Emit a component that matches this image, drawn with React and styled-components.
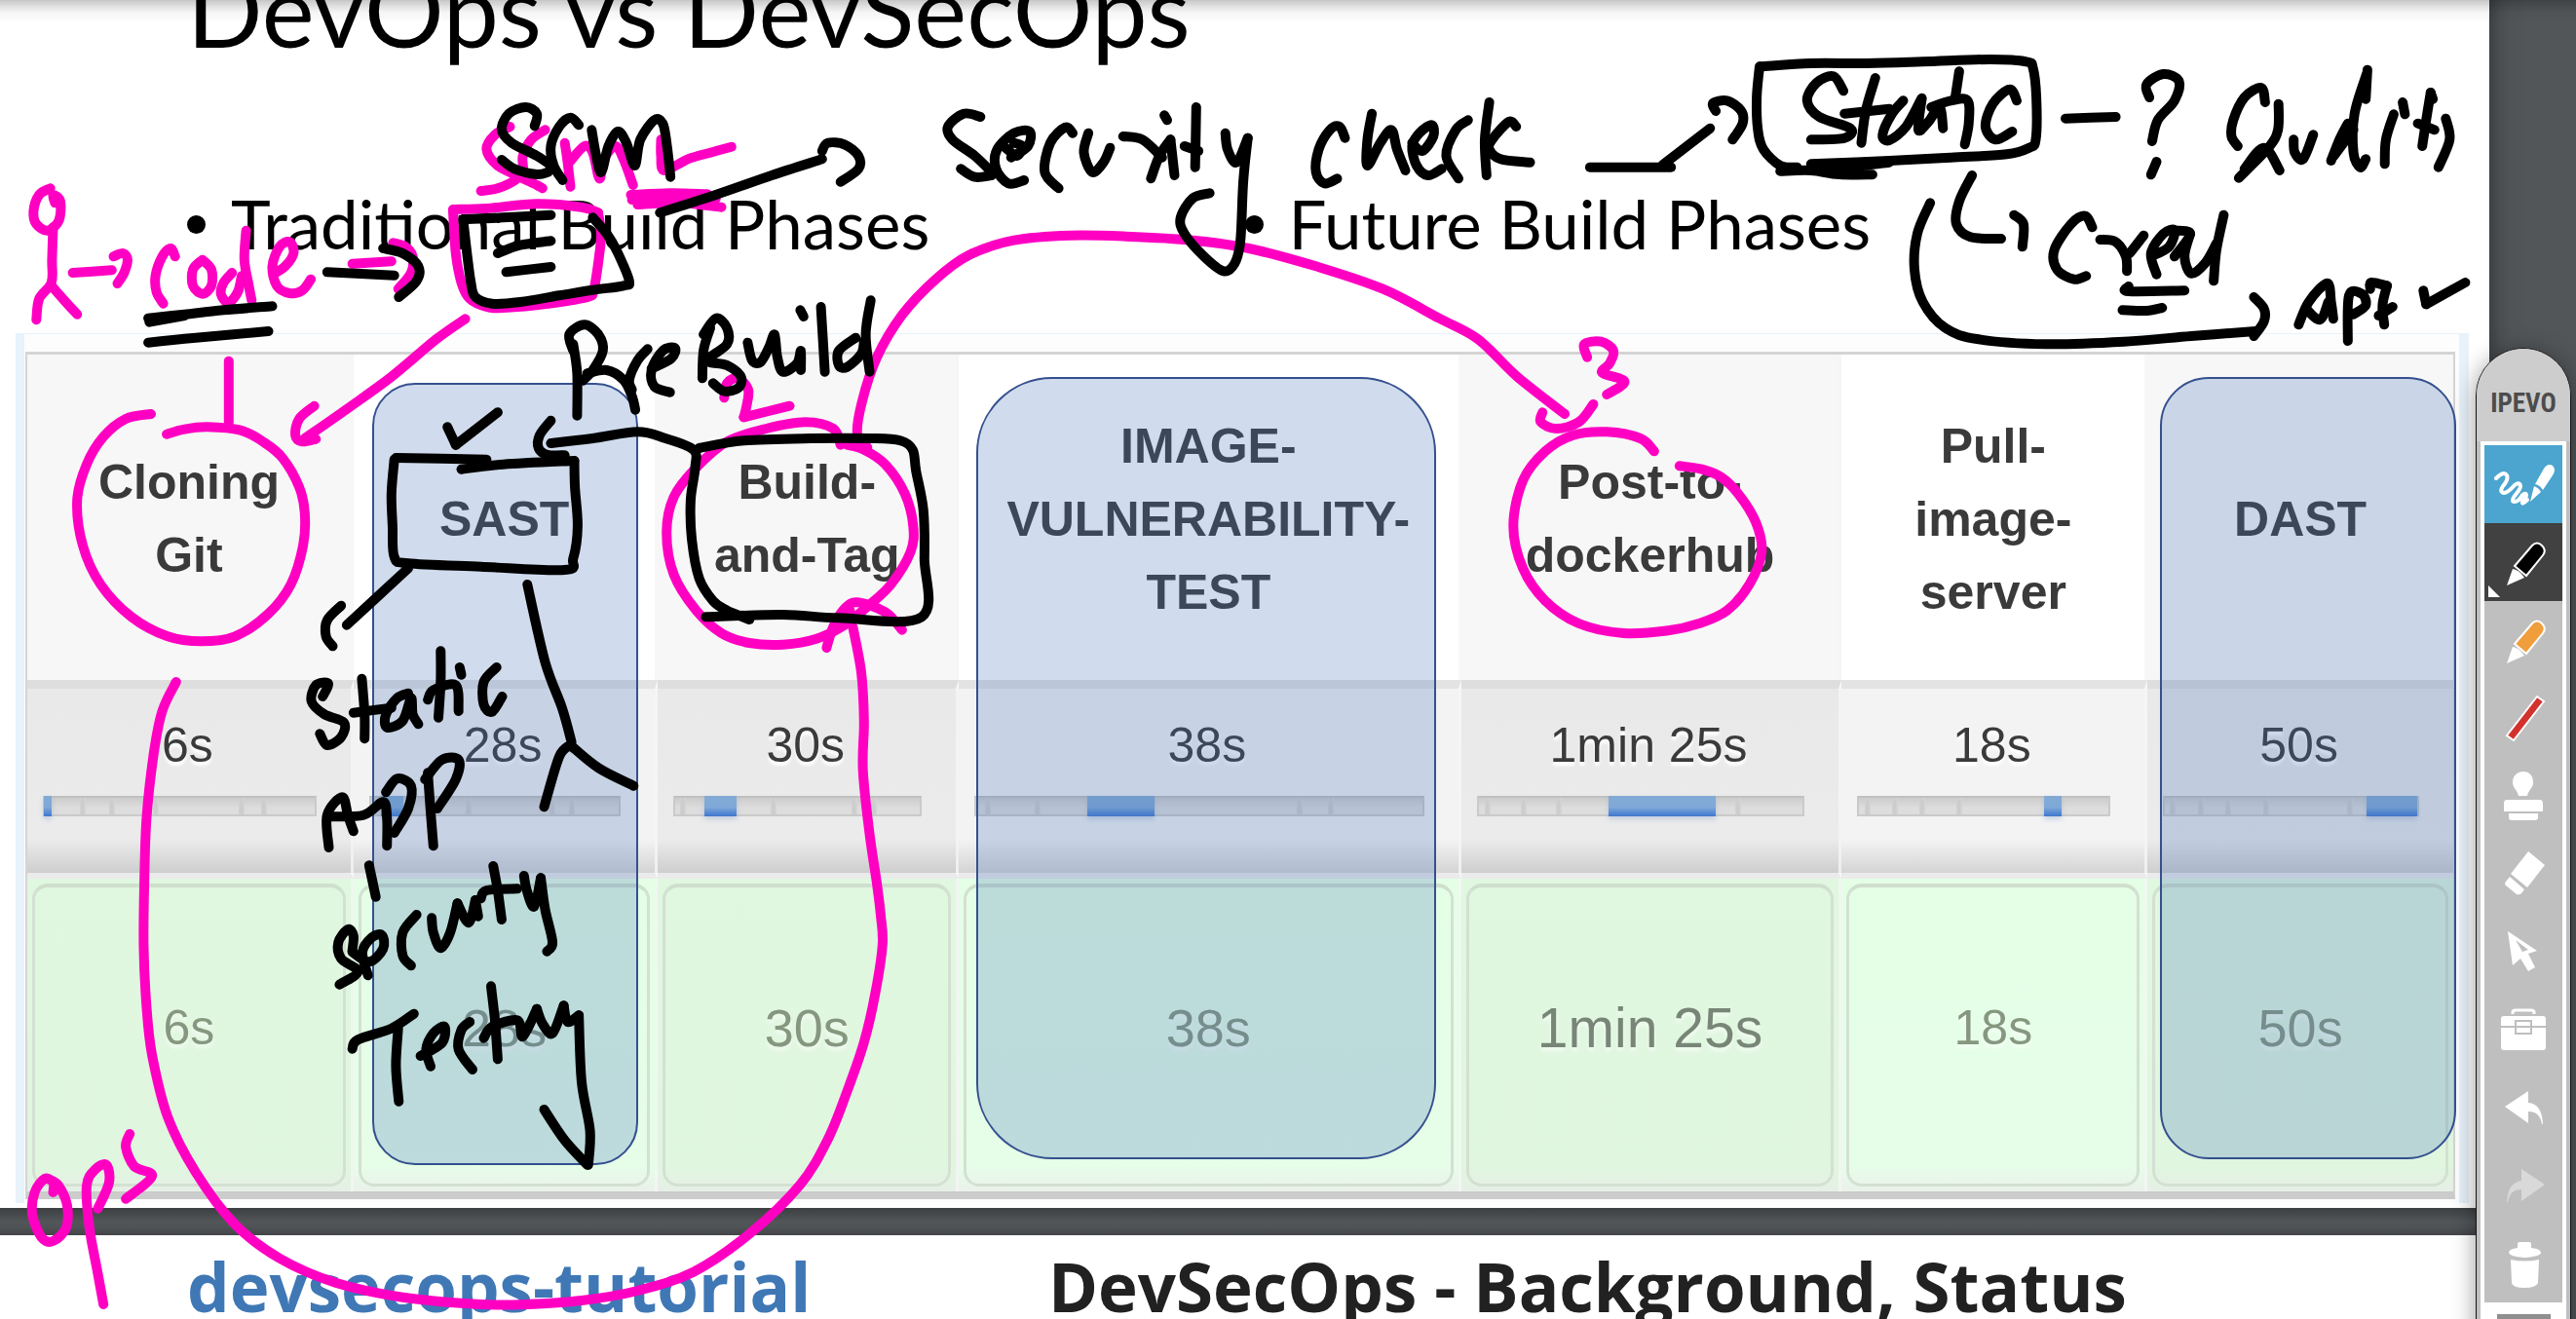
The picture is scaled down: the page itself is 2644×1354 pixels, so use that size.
import React from "react";
import styled, { createGlobalStyle, css } from "styled-components";

const GlobalStyle = createGlobalStyle`
  *, *::before, *::after { box-sizing: border-box; }
  html, body { margin: 0; background: #525659; }
`;

const SANS = `"Liberation Sans", Arial, sans-serif`;

/* ---------- document viewer ---------- */

const Viewer = styled.main`
  position: relative;
  height: 100vh;
  overflow: hidden;
  background: #525659;
`;

const TopShade = styled.div`
  position: absolute;
  inset: 0 0 auto 0;
  height: 24px;
  border-top: 1px solid rgba(0, 0, 0, 0.22);
  background: linear-gradient(rgba(0, 0, 0, 0.2), rgba(0, 0, 0, 0.04) 50%, transparent);
`;

const Pages = styled.div`
  display: flex;
  flex-direction: column;
  margin: -56px 89px 0 0;
  background: #525659;
  box-shadow: 0 0 24px rgba(0, 0, 0, 0.5);
`;

const Page = styled.section`
  background: #fff;
`;

const PageGap = styled.div`
  height: 28px;
  background: linear-gradient(#3d3f41, #525659 50%, #505356 70%, #444548);
`;

const Title = styled.h1`
  margin: 0;
  padding: 0 192px;
  font: 400 102px/132px Lato, sans-serif;
  color: #000;
  white-space: nowrap;
`;

const Phases = styled.ul`
  display: grid;
  grid-template-columns: 1fr 1fr;
  margin: 114px 0 72px;
  padding: 0 192px;
  list-style: none;
`;

const Phase = styled.li`
  display: flex;
  align-items: center;
  gap: 26px;
  font: 400 69px/80px Lato, sans-serif;
  color: #000;
  white-space: nowrap;

  &::before {
    content: "";
    width: 19px;
    height: 19px;
    border-radius: 50%;
    background: #000;
  }
`;

/* ---------- stage board ---------- */

const Board = styled.div`
  position: relative;
  margin: 0 21px 5px 16px;
  padding: 18px 4px 4px 1px;
  border: solid #e8f2fa;
  border-width: 1px 10px 0 9px;
  background: #fdfdfe;
`;

const StageTable = styled.table`
  width: 100%;
  table-layout: fixed;
  border-collapse: separate;
  border-spacing: 0;
  border: solid #d4d4d4;
  border-width: 3px 2px 0 2px;
  border-bottom: 8px solid #cccccc;
  font-family: ${SANS};
  color: #3a3a3a;
`;

const cellEdge = css`
  border-right: 3px solid rgba(245, 245, 245, 0.8);
  &:last-child { border-right: 0; }
`;

const StageName = styled.th`
  ${cellEdge}
  height: 334px;
  padding: 4px 0 0;
  background: #ffffff;
  font: 700 50px/75px ${SANS};
  white-space: pre-line;
  &:nth-child(odd) { background: #f7f7f7; }
`;

const TimeCell = styled.td`
  ${cellEdge}
  height: 204px;
  padding: 22px 35px 0 16px;
  vertical-align: top;
  border-top: 9px solid #e3e3e3;
  border-bottom: 6px solid #ebebeb;
  background: linear-gradient(#f3f3f3 82%, #d4d4d4);
  &:nth-child(odd) {
    border-top-color: #dedede;
    background: linear-gradient(#e9e9e9, #ebebeb 82%, #cecece);
  }
`;

const Time = styled.div`
  margin: 0 -16px 0 0;
  font-size: 50px;
  line-height: 72px;
  text-align: center;
  text-shadow: 0 4px 3px #fff;
`;

const Track = styled.div`
  position: relative;
  height: 21px;
  margin-top: 16px;
  border: 2px solid #cacaca;
  border-top-color: #c0c0c0;
  background: linear-gradient(#cccccc, #dddddd 60%);
`;

const Tick = styled.i`
  position: absolute;
  top: 0;
  bottom: 0;
  left: ${(p) => p.$at}%;
  width: 6px;
  background: linear-gradient(to right, #d2d2d2, #cbcbcb, #d6d6d6);
`;

const Span = styled.i`
  position: absolute;
  top: -2px;
  bottom: -2px;
  left: ${(p) => p.$from}%;
  width: ${(p) => p.$size}%;
  background: linear-gradient(#83aad4, #7fa9d8 55%, #3f77cf);
  box-shadow: 0 3px 5px rgba(120, 150, 200, 0.35);
`;

const ResultCell = styled.td`
  ${cellEdge}
  height: 321px;
  padding: 5px;
  background: linear-gradient(#e4ffe6, #e6fde8 92%, #eaf1ea);
  &:nth-child(odd) { background: linear-gradient(#e0f7e0, #e0f6df 92%, #e6efe6); }
`;

const Result = styled.div`
  display: flex;
  align-items: center;
  justify-content: center;
  height: 311px;
  padding-bottom: 16px;
  border: 3px solid #d3e0d2;
  border-top: 4px solid #cfdfcd;
  border-radius: 16px;
  font-size: ${(p) => p.$size}px;
  line-height: 1;
  color: ${(p) => (p.$size > 56 ? "#778677" : "#86977f")};
  text-shadow: 0 4px 4px rgba(255, 255, 255, 0.6);
`;

const Highlight = styled.div`
  position: absolute;
  top: ${(p) => p.$top}px;
  left: ${(p) => p.$left}%;
  width: ${(p) => p.$width}%;
  height: 803px;
  border: 2px solid #34508f;
  border-radius: ${(p) => p.$radius}px;
  background: rgba(66, 114, 184, 0.25);
`;

/* ---------- next page ---------- */

const Banner = styled.header`
  display: grid;
  grid-template-columns: 884px 1fr;
  padding: 2px 192px 40px;
  font: 700 69px/100px "Open Sans", sans-serif;
  white-space: nowrap;
`;

const BannerLink = styled.a`
  color: #3f78b5;
  text-decoration: none;
`;

const BannerTitle = styled.h2`
  margin: 0;
  font: inherit;
  color: #212121;
`;

/* ---------- pen toolbar ---------- */

const Toolbar = styled.aside`
  position: absolute;
  top: 357px;
  right: 5px;
  bottom: -40px;
  width: 98px;
  display: flex;
  flex-direction: column;
  border: 1px solid #141414;
  border-radius: 49px 49px 0 0;
  background: #bfbfbf;
  box-shadow: 0 4px 24px rgba(0, 0, 0, 0.4);
  overflow: hidden;
`;

const Brand = styled.div`
  padding-top: 36px;
  height: 96px;
  background: #cdcdcd;
  color: #4c4c4c;
  font: 700 27px/40px "Roboto Condensed", Roboto, sans-serif;
  text-align: center;
`;

const Tools = styled.div`
  flex: 1;
  display: flex;
  flex-direction: column;
  margin: 0 4px;
  padding: 4px;
  background: #fff;
`;

const Tool = styled.button`
  position: relative;
  display: flex;
  align-items: center;
  justify-content: center;
  flex: none;
  height: 80px;
  padding: 0;
  border: 0;
  background: ${(p) => p.$bg || "#bfbfbf"};
  svg { display: block; width: 72px; height: 60px; }
`;

const Handle = styled.div`
  width: 55px;
  height: 40px;
  margin: 12px auto 0;
  background: #8f8f8f;
`;

const Ink = styled.svg`
  position: absolute;
  inset: 0;
  width: 100%;
  height: 100%;
  pointer-events: none;
`;

/* ---------- data ---------- */

const STAGES = [
  { name: "Cloning\nGit", w: 13.45, time: "6s", size: 50, from: -0.5, span: 3, ticks: [13, 24, 40, 72, 80] },
  { name: "SAST", w: 12.55, time: "28s", size: 54, from: 4, span: 9, ticks: [38, 72, 80] },
  { name: "Build-\nand-Tag", w: 12.4, time: "30s", size: 54, from: 12, span: 13, ticks: [2, 39, 72, 80] },
  { name: "IMAGE-\nVULNERABILITY-\nTEST", w: 20.7, time: "38s", size: 54, from: 25, span: 15, ticks: [2, 13, 72, 79] },
  { name: "Post-to-\ndockerhub", w: 15.7, time: "1min 25s", size: 57, from: 40, span: 33, ticks: [2, 13, 24, 79] },
  { name: "Pull-\nimage-\nserver", w: 12.6, time: "18s", size: 50, from: 74, span: 7, ticks: [2, 13, 24, 39] },
  { name: "DAST", w: 12.6, time: "50s", size: 54, from: 80, span: 20, ticks: [2, 13, 24, 39, 72] },
];

const PINK = "#ff00c3";
const BLACK = "#000000";

/* Pen strokes are recorded per tile; a tile maps its own grid onto the screen. */
const TILES = {
  A: [0, 0], B: [880, 0], C: [1744, 0], D: [0, 440], E: [880, 440], G: [0, 894],
};

const STROKES = [
  [PINK, "A", [
    "90,580 70,600 60,650 65,690 85,710 105,680 108,620 95,600 98,625",
    "95,700 93,800 92,870 70,920 65,985",
    "92,880 115,925 138,968",
    "130,840 200,832",
    "203,790 220,780 228,800 222,840 210,873",
    "313,790 305,765 290,790 278,850 280,900 292,935",
    "362,800 345,830 345,880 362,905 378,880 378,830 362,800",
    "415,840 400,870 395,905 408,932 425,900 432,850",
    "440,710 437,800 445,880 450,925",
    "488,845 510,820 525,780 518,745 500,760 487,820 495,880 518,903 540,895 556,860",
    "630,812 700,805",
    "703,748 725,760 738,790 735,840 712,890",
    "810,645 815,780 825,870 840,920 870,945 900,948 980,935 1050,915 1062,890 1072,780 1075,720 1070,660",
    "812,645 870,642 960,628 1040,638 1070,655",
    "912,390 885,415 870,460 890,510 930,545 960,570 970,580",
    "860,588 890,580 925,550 935,520 935,480 950,430 975,400",
    "1010,440 1015,500 1020,575",
    "1018,500 1045,450 1060,470 1072,550 1080,490 1100,450 1115,490 1132,570",
    "1182,430 1182,480 1188,525 1230,490 1270,470 1308,452",
    "1128,600 1200,595 1265,598",
    "1130,615 1200,612 1280,612",
    "1140,630 1215,625 1290,638",
    "832,982 780,1045 700,1160 620,1260 545,1350",
    "562,1250 535,1290 528,1340 540,1360 565,1352",
    "409,1112 409,1300",
    "270,1275 225,1290 185,1345 155,1430 138,1540 148,1680 180,1800 235,1900 300,1960 360,1975 420,1960 480,1890 520,1800 542,1680 545,1580 535,1500 505,1410 470,1360 430,1325 370,1315 330,1322 298,1337",
    "1295,1225 1300,1180 1320,1165 1338,1200 1335,1250 1330,1285",
    "1330,1285 1412,1250",
    "1503,1370 1490,1320 1440,1300 1370,1320 1300,1360 1245,1440 1205,1530 1192,1640 1205,1770 1245,1880 1290,1950 1340,1980 1400,1985 1460,1967 1510,1925 1553,1865 1593,1800 1628,1700 1633,1620 1618,1520 1583,1430 1545,1385 1515,1370",
  ]],
  [PINK, "B", [
    "18,1378 0,1340 8,1240 35,1100 80,970 140,860 200,785 280,740 380,725 480,728 600,740 700,765 820,820 940,890 1040,980 1110,1045 1180,1160 1265,1275",
    "1225,1270 1222,1300 1250,1320 1290,1300 1316,1245",
    "1305,1100 1300,1060 1330,1052 1352,1080 1345,1120 1332,1148 1372,1175 1340,1215",
  ]],
  [PINK, "E", [
    "1425,70 1400,30 1340,10 1280,20 1230,70 1190,160 1173,300 1190,430 1230,530 1290,600 1370,630 1450,622 1505,600 1555,560 1595,480 1617,380 1607,290 1575,200 1545,150 1510,125 1470,115",
  ]],
  [PINK, "D", [
    "315,780 290,870 275,1000 262,1200 258,1400 257,1600 262,1780 272,1930 300,2120 350,2290 420,2450 500,2555 600,2630 720,2675 860,2697 940,2697 1040,2685 1140,2655 1240,2597 1340,2480 1430,2330 1480,2190 1515,2040 1545,1890 1565,1740 1578,1590 1575,1500 1568,1400 1555,1250 1543,1050 1545,900 1540,750 1525,610",
    "1478,675 1490,610 1510,555 1533,535 1583,565 1613,620",
    "1480,640 1510,590 1520,560",
  ]],
  [PINK, "G", [
    "95,990 95,960 80,948 62,990 58,1060 75,1130 95,1140 118,1100 120,1030 105,970 88,950",
    "175,1040 195,960 190,905 170,920 155,970 160,1100 175,1240 185,1335",
    "232,810 225,850 240,910 272,940 225,1010",
  ]],
  [BLACK, "A", [
    "265,980 330,968 400,955 487,943",
    "267,992 330,972",
    "265,1055 350,1040 480,1020",
    "585,838 705,848",
    "685,765 720,780 748,820 745,865 713,915",
    "828,675 835,780 842,870 850,915 880,935 930,930 1000,910 1060,893 1115,880 1125,865 1105,780 1085,720 1060,670",
    "830,675 900,670 985,662",
    "890,780 930,755 985,742",
    "905,838 985,822",
    "956,388 960,350 940,330 910,350 897,400 915,440 960,480 990,515",
    "897,492 920,520 960,537 980,530",
    "1035,385 1020,362 1000,390 985,450 990,510 1006,555",
    "1058,400 1065,470 1075,530 1088,450 1105,405 1120,440 1135,510 1145,430 1170,370 1185,380 1192,440 1199,545",
    "1180,655 1280,600 1380,540 1470,490",
    "1470,465 1480,440 1510,445 1535,480 1535,520 1503,560",
    "1025,1060 1032,1150 1032,1280",
    "1025,1080 1018,1030 1045,1000 1070,1030 1078,1080 1060,1140 1042,1172",
    "1050,1150 1085,1140 1115,1170 1130,1220 1136,1262",
    "1158,1075 1140,1110 1125,1170 1130,1200",
    "1165,1135 1200,1105 1207,1072 1185,1080 1165,1140 1170,1190 1198,1208",
    "1270,1010 1258,1080 1256,1165",
    "1258,1030 1280,980 1300,1010 1300,1060 1265,1110 1300,1125 1325,1160 1320,1195 1295,1205 1275,1180",
    "1337,1055 1345,1110 1360,1115 1375,1070 1385,1030 1390,1100 1400,1145 1425,1120 1432,1080 1432,1140",
    "1431,955 1437,975",
    "1468,945 1475,1145",
    "1530,1040 1500,1080 1500,1125 1515,1130 1540,1090 1545,1050",
    "1557,925 1548,1030 1555,1145",
    "800,1315 815,1370",
    "815,1370 890,1270",
    "985,1295 965,1340 963,1380 978,1400 1010,1402",
    "985,1365 1060,1350 1140,1330 1190,1350 1240,1385 1243,1440 1235,1540 1237,1660 1250,1780 1275,1850 1300,1880 1340,1908",
    "1250,1380 1330,1357 1450,1350 1560,1350 1610,1357 1632,1385 1638,1450 1651,1570 1653,1720 1648,1900 1500,1903 1400,1893 1262,1900",
  ]],
  [BLACK, "B", [
    "220,360 190,350 162,390 170,430 210,480 240,530",
    "185,520 210,545 240,540",
    "275,485 305,450 308,405 280,410 250,460 248,520 270,565 298,555",
    "265,455 285,480 295,450 280,440",
    "385,410 372,392 345,440 335,530 360,580",
    "413,410 405,470 420,530 440,500 452,455",
    "475,420 510,430 545,485",
    "560,430 540,480 525,550",
    "560,430 567,540",
    "549,355 554,370",
    "606,330 604,515",
    "585,450 610,465",
    "658,410 662,460 678,500 698,425",
    "698,425 690,560 685,740 675,810 655,835 620,790 585,720 578,670 600,610 630,595",
    "872,425 862,390 845,400 825,460 820,530 835,565 858,550",
    "920,350 912,430 912,510 935,440 955,400 965,460 980,525",
    "992,440 1010,465 1030,420 1027,385 1005,410 992,450 1000,510 1020,540 1045,520",
    "1092,370 1070,400 1053,480 1075,550",
    "1130,315 1122,430 1125,540",
    "1178,390 1165,375 1135,430 1130,460 1150,490 1203,500",
    "1310,515 1455,515",
    "1440,508 1525,395",
    "1535,342 1530,318 1555,310 1580,340 1583,380 1565,430",
  ]],
  [BLACK, "C", [
    "108,205 103,300 105,400 115,460 145,510 175,515",
    "110,205 200,195 300,195 400,190 520,183 585,190 597,210 603,300 602,430 590,455 550,475 450,485 340,495 200,505",
    "145,527 200,525 250,537 310,538",
    "210,512 260,515 340,500",
    "258,280 240,235 210,255 193,310 215,360 270,395 260,425 200,430",
    "315,240 298,340 290,440",
    "260,350 340,335",
    "365,310 345,350 328,415 340,432 370,390 398,302",
    "398,305 392,400 410,375 430,330 436,395",
    "415,330 450,310 480,310 482,380 475,445",
    "465,220 458,300",
    "568,310 555,275 525,320 512,390 530,430 560,405",
    "655,365 745,360",
    "805,300 800,260 830,228 858,250 850,310 820,370 810,435",
    "818,498 808,538",
    "1012,315 1005,270 975,300 955,370 952,420 963,450",
    "1036,320 1035,400 1018,455 965,548",
    "975,520 1010,455 1038,525",
    "1063,430 1065,470 1080,490 1098,415",
    "1130,495 1145,430 1160,380",
    "1135,480 1165,410 1170,400",
    "1195,215 1192,305",
    "1193,230 1172,350 1170,470 1182,515 1192,490",
    "1242,352 1228,430 1226,505",
    "1258,315 1262,352",
    "1308,285 1312,305",
    "1308,285 1300,370 1293,450",
    "1285,380 1315,400",
    "1335,365 1342,430 1322,515",
    "488,540 465,620 460,690 485,730 540,735",
    "563,662 580,690 578,760",
    "703,700 690,665 665,690 635,770 640,830 670,860 692,850",
    "717,738 745,745 763,790 765,835",
    "795,725 770,780",
    "808,790 840,760 850,710 830,720 808,780 818,845",
    "850,710 878,720 850,790",
    "878,720 868,790 880,842 905,810 925,750",
    "938,662 925,770 920,865",
    "768,882 768,897 868,895",
    "757,955 800,957 828,948",
    "413,625 390,720 385,830 400,930 440,1010 500,1045 620,1060 760,1052 880,1035 995,1020",
    "992,915 1010,950 1010,990 992,1035",
    "1072,1000 1090,930 1123,872 1130,930 1134,982",
    "1085,950 1110,985 1125,930",
    "1160,1050 1162,910 1185,905 1192,940 1170,968",
    "1200,890 1202,870 1230,880",
    "1230,880 1222,940 1225,1000",
    "1215,972 1240,945",
    "1295,895 1300,937",
    "1300,937 1370,870",
  ]],
  [BLACK, "D", [
    "705,95 700,200 702,300 705,395 730,415 860,425 1010,435 1025,400 1033,300 1028,180 1027,100",
    "708,90 870,95",
    "825,125 900,110 1027,99",
    "730,430 620,605",
    "610,545 585,590 583,640 595,670",
    "943,480 975,720 1005,860 1022,965",
    "1020,975 1000,1010 973,1165",
    "1020,975 1070,1045 1133,1100",
    "577,825 587,785 565,790 557,840 580,880 615,905 610,950 585,975 572,940",
    "647,770 652,880 652,955",
    "632,875 700,860",
    "730,815 710,830 690,880 692,920 720,900 735,830 738,880 748,910",
    "788,685 788,780 784,890",
    "765,835 775,805 815,790 820,870",
    "822,735 825,758",
    "888,735 865,780 865,850 880,872 898,825",
    "588,1290 585,1190 612,1135 622,1190 632,1240",
    "590,1195 650,1190 685,1150 692,1200 692,1285",
    "690,1120 710,1078 735,1100 730,1170 705,1245",
    "765,1060 770,1180 775,1285",
    "760,1080 790,1020 820,1020 815,1080 782,1170",
    "660,1345 672,1442",
  ]],
  [BLACK, "G", [
    "630,245 632,200 622,180 605,220 610,270 640,310 607,350",
    "630,250 660,280 685,240 683,198 665,205 648,250 658,322",
    "745,135 720,190 720,260 735,292",
    "772,145 775,190 788,238 805,190 818,100",
    "818,100 838,160 850,90",
    "850,90 855,140",
    "882,-15 890,60 897,150",
    "860,85 870,60 925,55",
    "937,15 942,60 955,110 967,22",
    "967,22 975,120 988,220 978,248",
    "630,548 640,520 700,485 740,440",
    "712,485 708,600 713,710",
    "752,570 790,530 795,480 775,500 762,550 770,602",
    "840,465 825,490 820,550 845,612",
    "878,355 885,460 890,580",
    "865,515 880,480 925,460 935,510 960,425",
    "960,425 970,470 988,500 1008,415",
    "1008,415 1015,465 1035,445",
    "1035,445 1040,650 1055,800 1052,905",
    "1050,905 1010,830 973,735",
  ]],
];

/* Joins recorded pen points with Catmull-Rom curves. */
function smooth(tile, text) {
  const [ox, oy] = TILES[tile];
  const p = text.split(" ").map((s) => {
    const [x, y] = s.split(",").map(Number);
    return [ox + x * 0.574, oy + y / 3];
  });
  const f = (n) => n.toFixed(1);
  let d = `M${f(p[0][0])} ${f(p[0][1])}`;
  for (let i = 0; i < p.length - 1; i++) {
    const a = p[i - 1] || p[i];
    const b = p[i];
    const c = p[i + 1];
    const e = p[i + 2] || c;
    d += `C${f(b[0] + (c[0] - a[0]) / 6)} ${f(b[1] + (c[1] - a[1]) / 6)} ${f(c[0] - (e[0] - b[0]) / 6)} ${f(c[1] - (e[1] - b[1]) / 6)} ${f(c[0])} ${f(c[1])}`;
  }
  return d;
}

/* ---------- toolbar icons ---------- */

const Pen = ({ fill }) => (
  <svg viewBox="-36 -30 72 60">
    <path d="M-9 4 L9 -17 Q14 -22 19 -17 Q24 -12 20 -7 L3 14 Z" fill={fill} stroke="#fff" strokeWidth="2" />
    <path d="M-11 7 Q-4 8 1 16 L-17 24 Z" fill="#fff" />
  </svg>
);

const TOOLS = [
  {
    label: "Freehand", bg: "#4ba5cf",
    icon: (
      <svg viewBox="-36 -30 72 60">
        <path d="M-28 -6 Q-20 -14 -17 -9 Q-15 -5 -21 2 Q-25 8 -20 9 Q-16 9 -9 1 Q-4 -3 -3 2 Q-3 5 -9 12 Q-13 18 -9 18 Q-5 18 -1 11 Q3 8 3 12 Q2 15 -1 18 Q-2 22 4 16" fill="none" stroke="#fff" strokeWidth="4" strokeLinecap="round" />
        <path d="M12 0 L21 -16 Q25 -22 30 -19 Q34 -15 30 -9 L20 6 Q17 1 12 0Z M11 2 Q16 4 18 8 L7 18Z" fill="#fff" />
      </svg>
    ),
  },
  { label: "Pen", bg: "#414141", icon: <Pen fill="#000" />, corner: true },
  { label: "Highlighter", icon: <Pen fill="#f09d3c" /> },
  {
    label: "Line",
    icon: (
      <svg viewBox="-36 -30 72 60">
        <path d="M-17 18 L14 -22 L21 -17 L-10 23 Z" fill="#d2322d" stroke="#fff" strokeWidth="2" />
      </svg>
    ),
  },
  {
    label: "Stamp",
    icon: (
      <svg viewBox="-36 -30 72 60" fill="#fff">
        <path d="M0 -25 C6 -25 10 -21 10 -14 C10 -8 5 -6 4 0 H-5 C-6 -6 -11 -8 -11 -14 C-11 -21 -6 -25 0 -25Z" />
        <path d="M-17 4 H17 Q20 4 20 8 V16 H-20 V8 Q-20 4 -17 4Z M-15 18 H15 V22 Q15 25 12 25 H-12 Q-15 25 -15 22Z" />
      </svg>
    ),
  },
  {
    label: "Eraser",
    icon: (
      <svg viewBox="-36 -30 72 60" fill="#fff">
        <path d="M5 -23 L22 -9 L4 14 L-13 0Z M-14 3 L1 16 L-2 20 Q-4 22 -7 21 L-18 12 Q-20 10 -18 8Z" />
      </svg>
    ),
  },
  {
    label: "Select",
    icon: (
      <svg viewBox="-36 -30 72 60" fill="#fff" fillRule="evenodd">
        <path d="M-16 -21 L14 -1 L5 2 L12 16 L5 20 L-3 7 L-11 14Z M-8 -12 L-1 0 L5 -2Z" />
      </svg>
    ),
  },
  {
    label: "Toolbox",
    icon: (
      <svg viewBox="-36 -30 72 60">
        <path d="M-11 -16 V-18 Q-11 -20 -8 -20 H8 Q11 -20 11 -18 V-16" fill="none" stroke="#fff" strokeWidth="3" />
        <rect x="-23" y="-14" width="46" height="35" rx="3" fill="#fff" />
        <path d="M-23 -3 H-8 M8 -3 H23 M-8 -9 H8 V4 H-8Z M-8 -3 H8" fill="none" stroke="#bfbfbf" strokeWidth="2" />
      </svg>
    ),
  },
  {
    label: "Undo",
    icon: (
      <svg viewBox="-36 -30 72 60" fill="#fff">
        <path d="M-19 -1 L5 -17 V-5 Q19 -4 20 17 H19 Q17 4 5 4 V16Z" />
      </svg>
    ),
  },
  {
    label: "Redo",
    icon: (
      <svg viewBox="-36 -30 72 60" fill="#d9d9d9">
        <path d="M22 -1 L-2 -17 V-5 Q-16 -3 -17 17 H-16 Q-14 4 -2 4 V16Z" />
      </svg>
    ),
  },
  {
    label: "Clear",
    icon: (
      <svg viewBox="-36 -30 72 60" fill="#fff">
        <path d="M-6 -16 V-20 Q-6 -22 -4 -22 H6 Q8 -22 8 -20 V-16 Q18 -15 18 -11 Q17 -7 1 -6 Q-14 -7 -15 -11 Q-15 -15 -6 -16Z" />
        <path d="M-13 -4 Q1 -1 16 -4 L15 20 Q13 25 1 25 Q-11 25 -12 20Z" />
      </svg>
    ),
  },
];

const Corner = styled.span`
  position: absolute;
  left: 4px;
  bottom: 4px;
  border: 6px solid transparent;
  border-left-color: #fff;
  border-bottom-color: #fff;
`;

export default function App() {
  return (
    <Viewer>
      <GlobalStyle />
      <Pages>
        <Page>
          <Title>DevOps vs DevSecOps</Title>
          <Phases>
            <Phase>Traditional Build Phases</Phase>
            <Phase>Future Build Phases</Phase>
          </Phases>
          <Board>
            <StageTable>
              <colgroup>
                {STAGES.map((s) => (
                  <col key={s.name} style={{ width: `${s.w}%` }} />
                ))}
              </colgroup>
              <thead>
                <tr>
                  {STAGES.map((s) => (
                    <StageName key={s.name} scope="col">{s.name}</StageName>
                  ))}
                </tr>
              </thead>
              <tbody>
                <tr>
                  {STAGES.map((s) => (
                    <TimeCell key={s.name}>
                      <Time>{s.time}</Time>
                      <Track>
                        {s.ticks.map((t) => (
                          <Tick key={t} $at={t} />
                        ))}
                        <Span $from={s.from} $size={s.span} />
                      </Track>
                    </TimeCell>
                  ))}
                </tr>
                <tr>
                  {STAGES.map((s) => (
                    <ResultCell key={s.name}>
                      <Result $size={s.size}>{s.time}</Result>
                    </ResultCell>
                  ))}
                </tr>
              </tbody>
            </StageTable>
            <Highlight $top={50} $left={14.3} $width={10.9} $radius={44} />
            <Highlight $top={44} $left={39.1} $width={18.9} $radius={78} />
            <Highlight $top={44} $left={87.7} $width={12.2} $radius={50} />
          </Board>
        </Page>
        <PageGap />
        <Page>
          <Banner>
            <BannerLink href="#tutorial">devsecops-tutorial</BannerLink>
            <BannerTitle>DevSecOps - Background, Status</BannerTitle>
          </Banner>
        </Page>
      </Pages>
      <TopShade />
      <Toolbar>
        <Brand>IPEVO</Brand>
        <Tools>
          {TOOLS.map((t) => (
            <Tool key={t.label} type="button" aria-label={t.label} $bg={t.bg}>
              {t.icon}
              {t.corner && <Corner />}
            </Tool>
          ))}
          <Handle />
        </Tools>
      </Toolbar>
      <Ink viewBox="0 0 2644 1354" preserveAspectRatio="none" aria-hidden="true">
        {STROKES.map(([color, tile, lines]) => (
          <g key={color + tile} fill="none" stroke={color} strokeWidth="10" strokeLinecap="round" strokeLinejoin="round">
            {lines.map((l) => (
              <path key={l} d={smooth(tile, l)} />
            ))}
          </g>
        ))}
      </Ink>
    </Viewer>
  );
}
